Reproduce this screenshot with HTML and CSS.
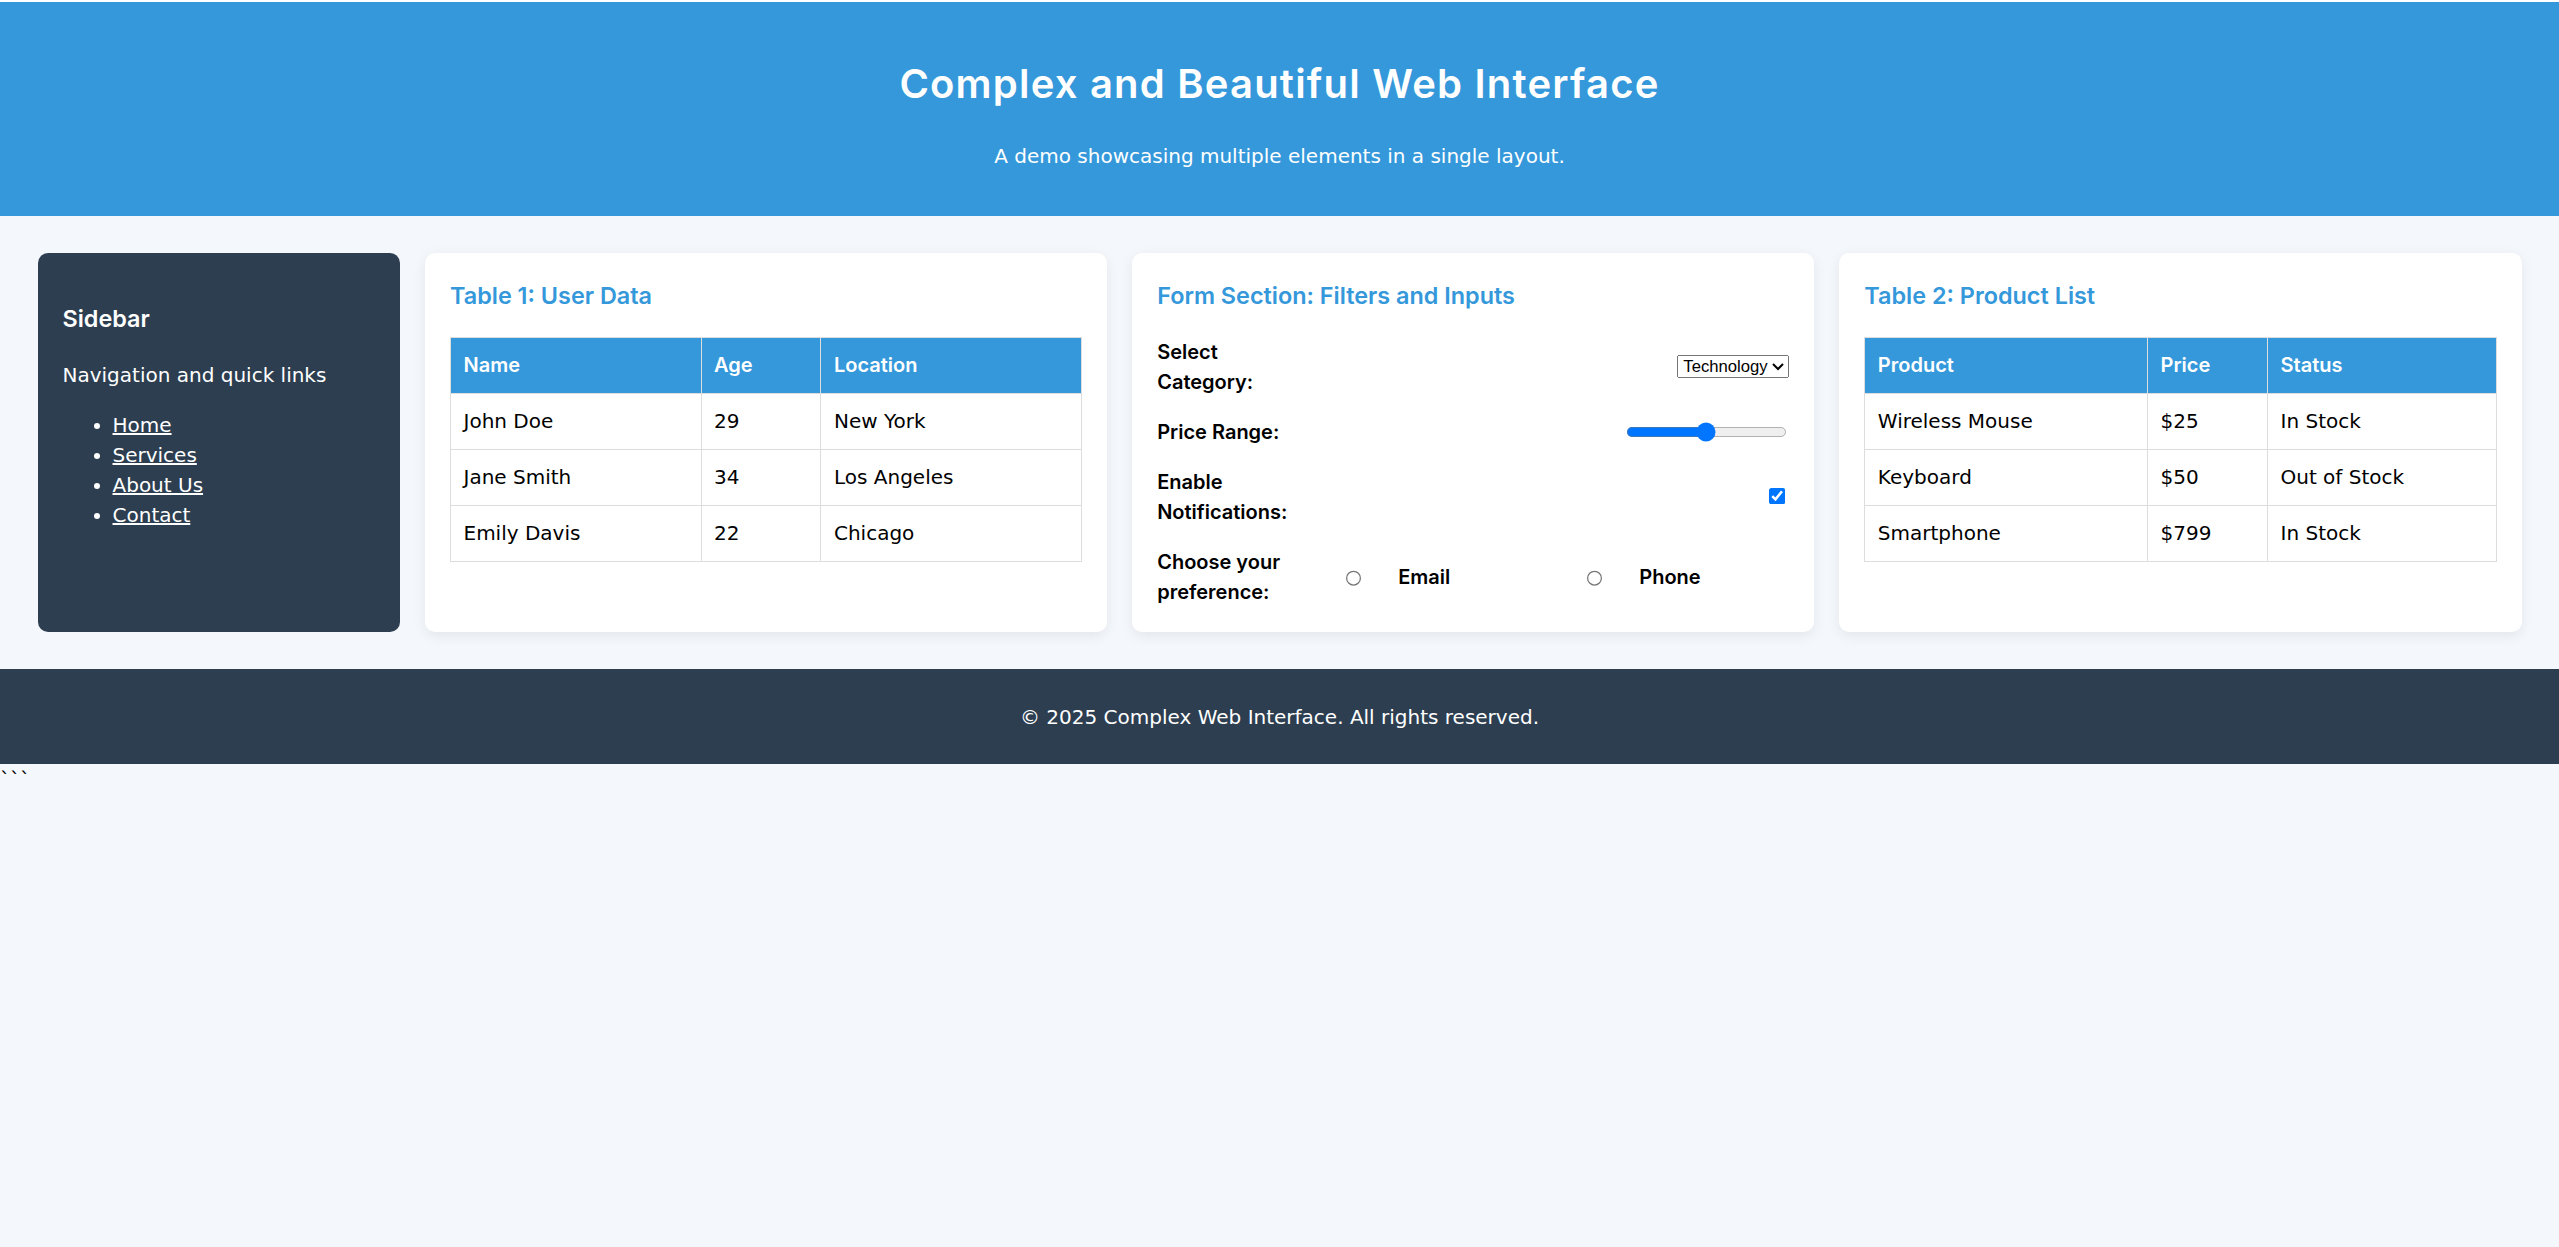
FILE: index.html
```html
<!DOCTYPE html>
<html lang="en">
<head>
<meta charset="UTF-8">
<title>Complex and Beautiful Web Interface</title>
<link rel="stylesheet" href="styles.css">
</head>
<body>
<header class="page-header">
  <h1>Complex and Beautiful Web Interface</h1>
  <p>A demo showcasing multiple elements in a single layout.</p>
</header>

<main class="layout">
  <aside class="sidebar">
    <h3>Sidebar</h3>
    <p>Navigation and quick links</p>
    <ul>
      <li><a href="#">Home</a></li>
      <li><a href="#">Services</a></li>
      <li><a href="#">About Us</a></li>
      <li><a href="#">Contact</a></li>
    </ul>
  </aside>

  <section class="card">
    <h3>Table 1: User Data</h3>
    <table class="data-table">
      <colgroup>
        <col class="c-name"><col class="c-age"><col class="c-loc">
      </colgroup>
      <thead>
        <tr><th>Name</th><th>Age</th><th>Location</th></tr>
      </thead>
      <tbody>
        <tr><td>John Doe</td><td>29</td><td>New York</td></tr>
        <tr><td>Jane Smith</td><td>34</td><td>Los Angeles</td></tr>
        <tr><td>Emily Davis</td><td>22</td><td>Chicago</td></tr>
      </tbody>
    </table>
  </section>

  <section class="card">
    <h3>Form Section: Filters and Inputs</h3>
    <form class="filters">
      <div class="form-group">
        <label class="form-label" for="category">Select Category:</label>
        <select id="category">
          <option>Technology</option>
          <option>Science</option>
          <option>Art</option>
        </select>
      </div>
      <div class="form-group">
        <label class="form-label" for="price">Price Range:</label>
        <input type="range" id="price" min="0" max="100" value="50">
      </div>
      <div class="form-group">
        <label class="form-label" for="notify">Enable Notifications:</label>
        <input type="checkbox" id="notify" checked>
      </div>
      <div class="form-group">
        <label class="form-label">Choose your preference:</label>
        <input type="radio" name="pref" id="pref-email">
        <label class="form-label" for="pref-email">Email</label>
        <input type="radio" name="pref" id="pref-phone">
        <label class="form-label" for="pref-phone">Phone</label>
      </div>
    </form>
  </section>

  <section class="card">
    <h3>Table 2: Product List</h3>
    <table class="data-table">
      <colgroup>
        <col class="c-product"><col class="c-price"><col class="c-status">
      </colgroup>
      <thead>
        <tr><th>Product</th><th>Price</th><th>Status</th></tr>
      </thead>
      <tbody>
        <tr><td>Wireless Mouse</td><td>$25</td><td>In Stock</td></tr>
        <tr><td>Keyboard</td><td>$50</td><td>Out of Stock</td></tr>
        <tr><td>Smartphone</td><td>$799</td><td>In Stock</td></tr>
      </tbody>
    </table>
  </section>
</main>

<footer class="page-footer">
  <p>&copy; 2025 Complex Web Interface. All rights reserved.</p>
</footer>
&#96;&#96;&#96;
</body>
</html>
```

FILE: styles.css
```css
html {
  background: #f4f7fb;
}

body {
  margin: 0;
  zoom: 1.25;
  font-family: "DejaVu Sans", "Noto Sans", sans-serif;
  font-size: 16px;
  line-height: 1.5;
  color: #000;
  background: #f4f7fb;
}

.page-header {
  border-top: 1.6px solid #fff;
  background: #3498db;
  color: #fff;
  text-align: center;
  padding: 20px;
}

.page-header h1 {
  font-family: "Inter", "Liberation Sans", sans-serif;
  font-weight: 600;
  font-size: 2em;
  letter-spacing: 0.03em;
  margin: 0.67em 0;
}

.page-header p {
  margin: 16px 0;
}

.layout {
  display: grid;
  grid-template-columns: 290px 1fr 1fr 1fr;
  gap: 20px;
  padding: 30px;
}

.sidebar {
  background: #2c3e50;
  color: #fff;
  border-radius: 8px;
  padding: 20px;
}

.sidebar h3 {
  font-family: "Inter", "Liberation Sans", sans-serif;
  font-weight: 600;
  font-size: 1.17em;
  margin: 1em 0;
}

.sidebar p {
  margin: 16px 0;
}

.sidebar ul {
  margin: 16px 0;
  padding-left: 40px;
}

.sidebar a {
  color: #fff;
  text-decoration: underline;
}

.card {
  background: #fff;
  border-radius: 8px;
  padding: 20px;
  box-shadow: 0 3px 10px rgba(0, 0, 0, 0.07);
}

.card h3 {
  font-family: "Inter", "Liberation Sans", sans-serif;
  font-weight: 600;
  font-size: 1.17em;
  color: #3498db;
  margin: 0 0 1em;
}

.data-table {
  width: 100%;
  border-collapse: collapse;
  table-layout: fixed;
}

.data-table th,
.data-table td {
  border: 1px solid #ddd;
  padding: 10px;
  text-align: left;
  font-weight: normal;
}

.data-table th {
  background: #3498db;
  color: #fff;
  font-family: "Inter", "Liberation Sans", sans-serif;
  font-weight: 600;
}

.c-name { width: 39.7%; }
.c-age { width: 19%; }
.c-loc { width: 41.3%; }

.c-product { width: 44.8%; }
.c-price { width: 19%; }
.c-status { width: 36.2%; }

.filters {
  margin: 0;
}

.form-group {
  display: flex;
  justify-content: space-between;
  align-items: center;
  margin-bottom: 16px;
}

.form-group:last-child {
  margin-bottom: 0;
}

.form-label {
  width: 120px;
  font-family: "Inter", "Liberation Sans", sans-serif;
  font-weight: 600;
}

.form-group select {
  font-family: "Liberation Sans", Arial, sans-serif;
}

.page-footer {
  background: #2c3e50;
  color: #fff;
  text-align: center;
  padding: 10px;
}

.page-footer p {
  margin: 16px 0;
}
```
